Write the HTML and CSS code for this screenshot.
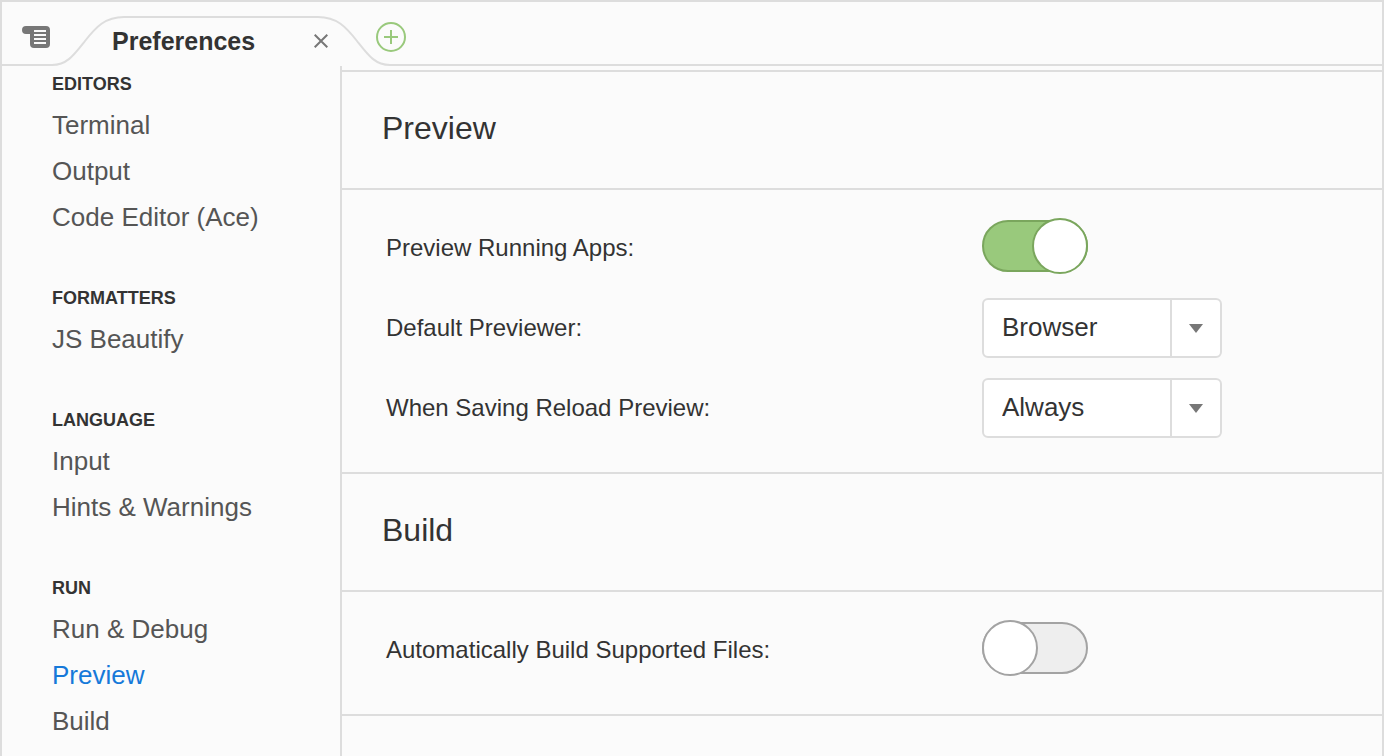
FILE: index.html
```html
<!DOCTYPE html>
<html lang="en">
<head>
<meta charset="utf-8">
<meta name="viewport" content="width=device-width, initial-scale=1">
<title>Preferences</title>
<link rel="stylesheet" href="styles.css">
</head>
<body>
<div class="window">
  <header class="tabbar">
    <button class="icon-button menu-button" type="button" aria-label="Tab menu">
      <svg width="28" height="22" viewBox="0 0 28 22" aria-hidden="true">
        <path class="menu-shape" d="M4 0H24A4 4 0 0 1 28 4V18A4 4 0 0 1 24 22H12A4 4 0 0 1 8 18V8H4A4 4 0 0 1 4 0Z"/>
        <path class="menu-lines" d="M12 5H24M12 9H24M12 13H24M12 17H24"/>
      </svg>
    </button>
    <div class="tab">
      <svg class="tab-shape" width="338" height="50" viewBox="0 0 338 50" aria-hidden="true">
        <path class="tab-fill" d="M0 50V49C15 49 22 39 33 25C44 11 53 1 72 1H266C285 1 294 11 305 25C316 39 323 49 338 49V50Z"/>
        <path class="tab-line" d="M0 49C15 49 22 39 33 25C44 11 53 1 72 1H266C285 1 294 11 305 25C316 39 323 49 338 49"/>
      </svg>
      <span class="tab-title">Preferences</span>
      <button class="icon-button close-button" type="button" aria-label="Close tab">
        <svg width="14" height="14" viewBox="0 0 14 14" aria-hidden="true"><path d="M.7 .7L13.3 13.3M13.3 .7L.7 13.3"/></svg>
      </button>
    </div>
    <button class="icon-button add-button" type="button" aria-label="New tab">
      <svg width="30" height="30" viewBox="0 0 30 30" aria-hidden="true"><circle cx="15" cy="15" r="14"/><path d="M8 15H22M15 8V22"/></svg>
    </button>
  </header>
  <div class="content">
    <nav class="sidebar" aria-label="Preference sections">
      <section class="group">
        <h2 class="group-title">EDITORS</h2>
        <a class="nav-link" href="#terminal">Terminal</a>
        <a class="nav-link" href="#output">Output</a>
        <a class="nav-link" href="#ace">Code Editor (Ace)</a>
      </section>
      <section class="group">
        <h2 class="group-title">FORMATTERS</h2>
        <a class="nav-link" href="#beautify">JS Beautify</a>
      </section>
      <section class="group">
        <h2 class="group-title">LANGUAGE</h2>
        <a class="nav-link" href="#input">Input</a>
        <a class="nav-link" href="#hints">Hints &amp; Warnings</a>
      </section>
      <section class="group">
        <h2 class="group-title">RUN</h2>
        <a class="nav-link" href="#run">Run &amp; Debug</a>
        <a class="nav-link current" href="#preview" aria-current="true">Preview</a>
        <a class="nav-link" href="#build">Build</a>
      </section>
    </nav>
    <main class="settings">
      <section class="panel" id="preview">
        <h1 class="panel-title">Preview</h1>
        <div class="rows">
          <div class="row">
            <label for="running">Preview Running Apps:</label>
            <input class="toggle" id="running" type="checkbox" checked>
          </div>
          <div class="row">
            <label for="previewer">Default Previewer:</label>
            <span class="dropdown">
              <select id="previewer"><option>Browser</option></select>
              <svg class="arrow" width="14" height="9" viewBox="0 0 14 9" aria-hidden="true"><path d="M0 0H14L7 9Z"/></svg>
            </span>
          </div>
          <div class="row">
            <label for="reload">When Saving Reload Preview:</label>
            <span class="dropdown">
              <select id="reload"><option>Always</option></select>
              <svg class="arrow" width="14" height="9" viewBox="0 0 14 9" aria-hidden="true"><path d="M0 0H14L7 9Z"/></svg>
            </span>
          </div>
        </div>
      </section>
      <section class="panel" id="build">
        <h1 class="panel-title">Build</h1>
        <div class="rows">
          <div class="row">
            <label for="autobuild">Automatically Build Supported Files:</label>
            <input class="toggle" id="autobuild" type="checkbox">
          </div>
        </div>
      </section>
    </main>
  </div>
</div>
</body>
</html>
```
FILE: styles.css
```css
:root {
  --line: #dddddd;
  --page: #fbfbfb;
  --ink: #333333;
  --grey: #777777;
}

*,
*::before {
  box-sizing: border-box;
}

body {
  margin: 0;
  background: var(--page);
  color: var(--ink);
  font-family: "Liberation Sans", Arial, sans-serif;
}

.window {
  display: flex;
  flex-direction: column;
  height: 100vh;
  overflow: hidden;
  border: 2px solid var(--line);
  border-bottom: 0;
}

.tabbar {
  display: flex;
  flex: none;
  height: 64px;
  border-bottom: 2px solid var(--line);
}

.icon-button {
  flex: none;
  padding: 0;
  border: 0;
  background: none;
}

.icon-button svg {
  display: block;
  fill: none;
  stroke-width: 2;
}

.menu-button {
  align-self: flex-start;
  margin: 24px 2px 0 20px;
}

.menu-button .menu-shape {
  fill: var(--grey);
}

.menu-button .menu-lines {
  stroke: var(--page);
}

.tab {
  position: relative;
  display: flex;
  align-items: center;
  justify-content: space-between;
  flex: none;
  width: 338px;
  height: 50px;
  margin-top: 14px;
  padding: 0 62px 0 60px;
}

.tab-shape {
  position: absolute;
  inset: 0;
}

.tab-fill {
  fill: var(--page);
}

.tab-line {
  fill: none;
  stroke: var(--line);
  stroke-width: 2;
}

.tab-title {
  position: relative;
  font-size: 25px;
  font-weight: bold;
  line-height: 30px;
}

.close-button {
  position: relative;
}

.close-button svg {
  stroke: var(--grey);
}

.add-button {
  align-self: flex-start;
  margin: 20px 0 0 -14px;
  position: relative;
}

.add-button svg {
  stroke: #99c97c;
}

.content {
  display: flex;
  flex: 1;
  min-height: 0;
}

.sidebar {
  display: flex;
  flex-direction: column;
  flex: none;
  gap: 40px;
  width: 340px;
  padding-left: 50px;
  overflow: hidden;
  border-right: 2px solid var(--line);
}

.group {
  display: flex;
  flex-direction: column;
}

.group-title {
  margin: 0;
  font-size: 18px;
  line-height: 36px;
}

.nav-link {
  color: #555555;
  font-size: 26px;
  line-height: 46px;
  text-decoration: none;
}

.nav-link.current {
  color: #1679d9;
}

.settings {
  flex: 1;
  min-width: 0;
  padding-top: 4px;
  overflow: hidden;
}

.panel {
  border-top: 2px solid var(--line);
}

.panel:last-child {
  border-bottom: 2px solid var(--line);
}

.panel-title {
  margin: 0;
  padding: 36px 40px 40px;
  border-bottom: 2px solid var(--line);
  font-size: 32px;
  font-weight: normal;
  line-height: 40px;
}

.rows {
  padding: 18px 44px 24px;
}

.row {
  display: grid;
  grid-template-columns: minmax(0, 596px) auto;
  align-items: center;
  justify-content: start;
  height: 80px;
  font-size: 24px;
}

.toggle {
  display: flex;
  align-items: center;
  width: 106px;
  height: 52px;
  margin: 0 0 4px;
  appearance: none;
  border: 2px solid #a3a3a3;
  border-radius: 26px;
  background: #eeeeee;
}

.toggle::before {
  content: "";
  flex: none;
  width: 56px;
  height: 56px;
  margin: 0 -2px;
  border: 2px solid #a3a3a3;
  border-radius: 50%;
  background: #ffffff;
}

.toggle:checked {
  justify-content: flex-end;
  border-color: #7aa65d;
  background: #99c97c;
}

.toggle:checked::before {
  border-color: #7aa65d;
}

.dropdown {
  position: relative;
  display: block;
  width: 240px;
}

.dropdown select {
  display: block;
  width: 100%;
  height: 60px;
  padding: 0 68px 2px 18px;
  appearance: none;
  border: 2px solid var(--line);
  border-radius: 6px;
  background: linear-gradient(var(--line), var(--line)) right 48px top / 2px 100% no-repeat #ffffff;
  color: var(--ink);
  font: 26px "Liberation Sans", Arial, sans-serif;
}

.arrow {
  position: absolute;
  top: 26px;
  right: 19px;
  fill: var(--grey);
  pointer-events: none;
}
```
